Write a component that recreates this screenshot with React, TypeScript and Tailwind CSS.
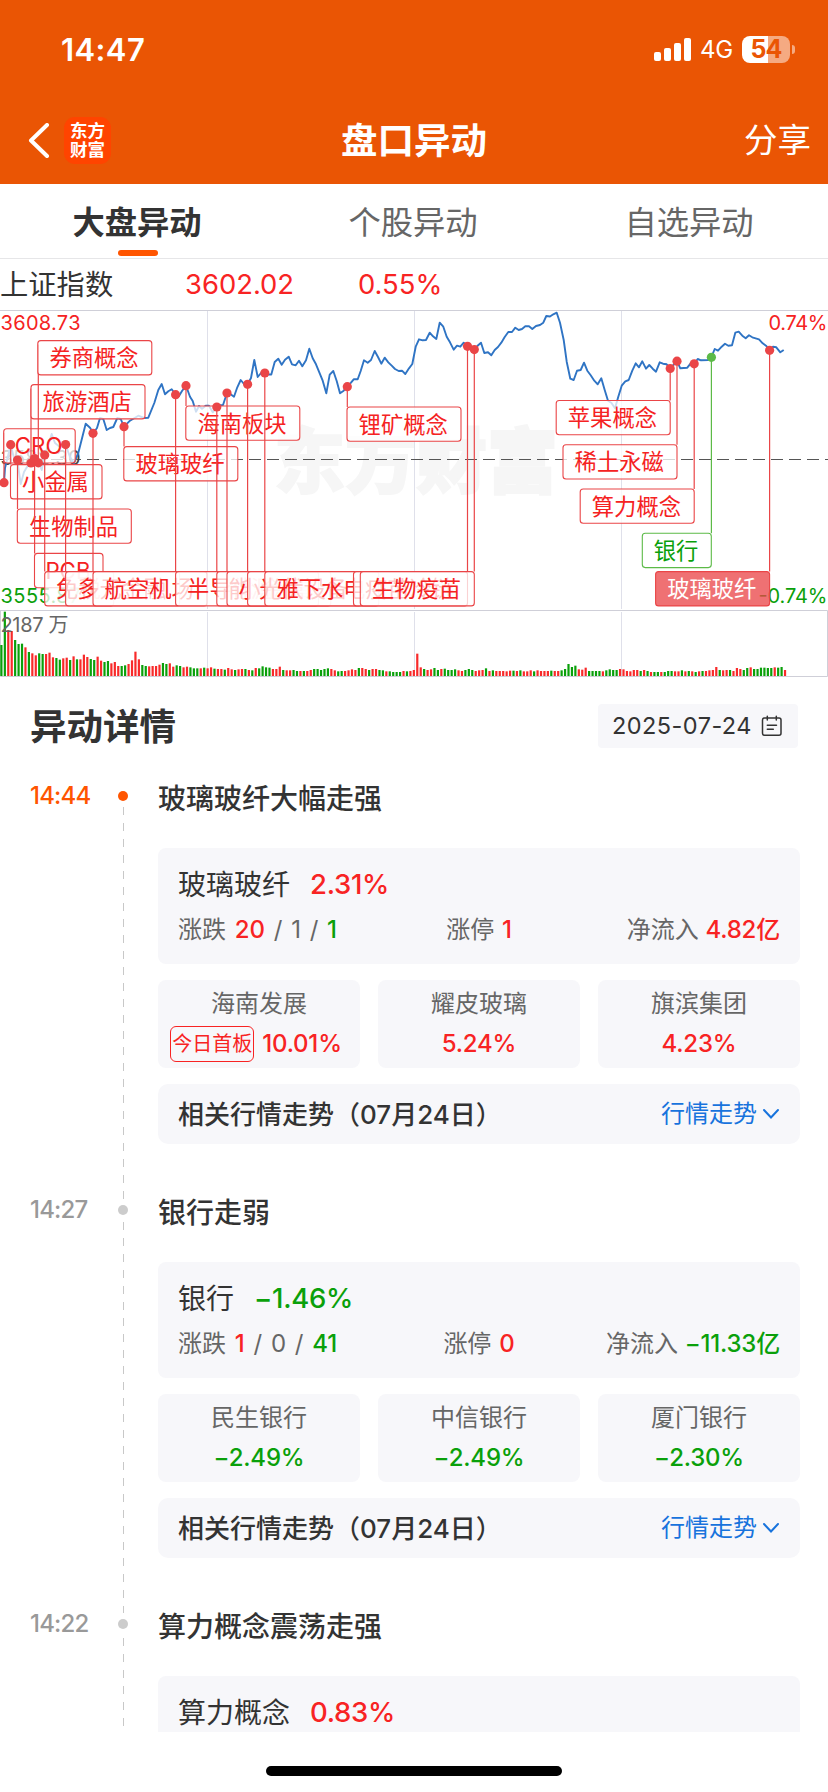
import React from "react";
import { clsx } from "clsx";

type Tone = "up" | "down";

interface Stock {
  name: string;
  change: string;
  tag?: string;
}

interface SectorStats {
  rise: string;
  even: string;
  fall: string;
  limitUp: string;
  inflow: string;
}

interface MoveEvent {
  time: string;
  title: string;
  sector: string;
  change: string;
  tone: Tone;
  stats?: SectorStats;
  stocks?: Stock[];
}

interface ChartTag {
  label: string;
  dotX: number;
  dotY: number;
  x: number;
  y: number;
  w: number;
  kind?: "green" | "active";
}

const toneClass: Record<Tone, string> = {
  up: "text-[#f82323]",
  down: "text-[#0aa00a]",
};

const events: MoveEvent[] = [
  {
    time: "14:44",
    title: "玻璃玻纤大幅走强",
    sector: "玻璃玻纤",
    change: "2.31%",
    tone: "up",
    stats: { rise: "20", even: "1", fall: "1", limitUp: "1", inflow: "4.82亿" },
    stocks: [
      { name: "海南发展", change: "10.01%", tag: "今日首板" },
      { name: "耀皮玻璃", change: "5.24%" },
      { name: "旗滨集团", change: "4.23%" },
    ],
  },
  {
    time: "14:27",
    title: "银行走弱",
    sector: "银行",
    change: "−1.46%",
    tone: "down",
    stats: { rise: "1", even: "0", fall: "41", limitUp: "0", inflow: "−11.33亿" },
    stocks: [
      { name: "民生银行", change: "−2.49%" },
      { name: "中信银行", change: "−2.49%" },
      { name: "厦门银行", change: "−2.30%" },
    ],
  },
  {
    time: "14:22",
    title: "算力概念震荡走强",
    sector: "算力概念",
    change: "0.83%",
    tone: "up",
  },
];

const pricePoints =
  "4,483 5,468 10.7,445 14,458 17.3,460 20.7,484 24,472 27,467 31,463 34.7,459 39,463 41.7,470 44.7,455 48,446 51.7,434 55,443 60,447 65.7,445 70,457 74,463 78.3,453 85.7,423.7 90,427.7 93.3,433 97,428 100,418 103.3,419 106.7,430 110,428 113.3,427 117.3,418 120.7,419 124,426.7 130,420.7 138.3,415.7 144,418 148.3,417.7 154.3,403 158.3,390 161.7,384 165,394.3 168.3,391.3 171.7,389.3 175.7,394.7 179,396 182,391 186,385.7 190,396.7 192.7,401 196,411.7 199,406 202,408.7 205.7,405.7 209,405.7 212.7,412.3 217,407 220,405.3 223,405 227,393 230.3,394 234,396.7 237.3,387.3 240.7,380 244,384 247.7,384 251,378 254.3,360 257.7,377 261,373 265,373 268,374.5 271.3,374.5 274.7,362 278.3,358.7 281.7,364.7 285,359.7 288.7,356.7 292,364.3 295.7,365.3 299,360.7 302.3,366.3 306,360.3 309.3,348.7 312.7,358.3 316,364.3 319.3,372.3 322.7,380.7 326.3,393.3 329.7,374.7 333.3,371 336.7,381 340,393.3 343.7,390.7 347.3,386.7 351,382.7 353.7,379.3 357.7,379.3 360.7,371 364,360.3 367.7,362.7 371,360 374.7,351 378,357 381.3,363.7 384.7,357.7 388.3,362.3 391.7,365.7 395,369 398.7,371 402,370.7 405.3,374 409,368.3 412.3,364 415.7,346.7 419,339.3 422.7,340.3 426,340 429.7,332.7 433,336.3 436.3,339 439.7,322.7 443.3,326.7 446.7,336.7 450,342.3 453.7,349.7 457,345.7 460.3,346.7 463.7,342.7 467.7,346.3 474.3,349.7 477.3,346 481,342.7 484.3,353 488,352.3 491.3,355.3 494.7,350 498,347 501.3,342.7 504.7,337 508.3,332 512,332 515.3,327.7 518.7,330 522,329 525.3,326.3 529,326.3 532.3,329 536,326 540,325 543.3,322.7 546.3,316 550,316.5 553.3,314.3 556.7,312.7 560,322.7 563.7,340 566.7,361.7 570.3,378.7 573.7,380 577,370.7 580.7,370 584,362.7 587.3,370.7 590.7,375.3 594.3,380.7 597.7,384.3 601.3,378.3 604.7,390 608,400.7 611.3,402.7 615,408.3 618.3,396.7 621.7,385.7 625.3,381.3 628.7,380 632.3,370.7 635.7,363.3 639,367.3 642.3,361.3 646,368.7 649.3,365 652.7,368.7 656,371.7 659.7,362.3 663,363.7 666.7,364.3 670.3,368.3 677,361 680.3,368.3 687.3,367.7 690.7,363.3 694.3,363.7 697.7,359 701,360.3 708,360 711.3,357.3 714.7,349 718,350.7 721.7,346.7 725,343.7 728.3,345.7 732,345.3 735.3,332.7 738.7,331.7 742.3,335.7 745.7,338.3 749,335.3 752.3,337.3 759,339.3 762.7,343.3 766,345.7 769.7,350 773,346.7 776.3,347.3 780.3,352.3 783.7,350";

// bar height in thirds of a pixel, followed by r (up) or g (down)
const volumes = (
  "93g 193g 138r 135r 108g 96g 97g 86r 72g 68r 62r 68g 66g 66r 70r 56r 54g 49g 53r 55r 48g 59r 50g 50r 64r 57r 51g 48g 58r 46r 42g 45g 38r 42r 30r 30g 32g 36r 47r 73r 50r 33g 30g 29r 30r 30r 34r 39g 36g 38r 28r 32g 30g 26r 28r 26g 23g 23g 23r 25g 23r 26r 22g 21r 21r 19g 24r 20r 18g 20r 21r 21g 18r 17g 24r 23g 29g 26g 25g " +
  "21r 21r 28r 18g 17r 17r 18g 15g 15r 15g 15r 18r 21g 21g 18g 21g 23g 21r 17r 14g 15g 15r 17r 20r 18r 24g 24r 21r 18g 21r 21r 18g 17g 14r 14g 12g 12g 12g 15r 14g 15r 18r 67r 26r 21g 18r 20r 24g 18g 21r 22g 18g 18g 20g 17r 15r 18g 21g 18g 15r 17r 18r 23g 15r 17g 15r 15r 15r 14r 16r 16g 15r 17g 14r 14r 17r 14g 17r 15r 15r 15r " +
  "16g 15r 15r 17g 21g 36g 27g 31g 20r 19r 25r 15g 15g 15g 15g 14r 17g 20g 18g 18g 21r 20r 15r 14r 18r 18r 15g 18r 15g 12r 12g 12g 12r 12g 15g 15g 14r 14r 17g 14r 15g 14r 12g 14r 15g 15r 17r 18r 27r 18g 17r 18r 18g 15r 24r 21r 18g 24g 26r 21g 21g 25g 25g 24g 24g 26r 25g 27g 18r"
).split(" ");

const tags: ChartTag[] = [
  { label: "CRO", dotX: 4, dotY: 482.7, x: 3.7, y: 428.7, w: 71.5 },
  { label: "小金属", dotX: 10.7, dotY: 444.7, x: 10.5, y: 464.6, w: 91.5 },
  { label: "生物制品", dotX: 17.5, dotY: 460, x: 17.3, y: 509, w: 114 },
  { label: "旅游酒店", dotX: 31, dotY: 463, x: 31, y: 384.6, w: 114 },
  { label: "PCB", dotX: 34.6, dotY: 458.5, x: 34.5, y: 553.4, w: 68.5 },
  { label: "券商概念", dotX: 38.3, dotY: 462.8, x: 37.8, y: 340.6, w: 114 },
  { label: "免税", dotX: 44.7, dotY: 455, x: 44.7, y: 571.6, w: 69 },
  { label: "多元金融", dotX: 65.6, dotY: 444.6, x: 65.6, y: 571.6, w: 114 },
  { label: "航空机场", dotX: 93, dotY: 433.3, x: 93, y: 571.6, w: 114 },
  { label: "玻璃玻纤", dotX: 124, dotY: 426.7, x: 123.8, y: 446.6, w: 114 },
  { label: "半导体", dotX: 175.6, dotY: 394.7, x: 175.6, y: 571.6, w: 91.5 },
  { label: "海南板块", dotX: 186, dotY: 385.7, x: 185.8, y: 406, w: 114 },
  { label: "能源金属", dotX: 216.8, dotY: 407, x: 216.8, y: 571.6, w: 114 },
  { label: "小金属", dotX: 227, dotY: 393, x: 227, y: 571.6, w: 91.5 },
  { label: "光伏设备", dotX: 247.6, dotY: 384.3, x: 247.6, y: 571.6, w: 114 },
  { label: "雅下水电", dotX: 264.8, dotY: 373, x: 264.8, y: 571.6, w: 114 },
  { label: "锂矿概念", dotX: 347.3, dotY: 386.7, x: 347, y: 407, w: 114 },
  { label: "疫苗冷链", dotX: 467.5, dotY: 346.3, x: 353.5, y: 571.6, w: 114 },
  { label: "生物疫苗", dotX: 474.3, dotY: 349.6, x: 360.3, y: 571.6, w: 114 },
  { label: "苹果概念", dotX: 670.2, dotY: 368.5, x: 556.2, y: 400.5, w: 114 },
  { label: "稀土永磁", dotX: 677, dotY: 361.2, x: 563, y: 444.7, w: 114 },
  { label: "算力概念", dotX: 694.2, dotY: 363.8, x: 580.2, y: 489, w: 114 },
  { label: "银行", dotX: 711.4, dotY: 357.3, x: 642.3, y: 533.3, w: 69, kind: "green" },
  { label: "玻璃玻纤", dotX: 769.6, dotY: 350.3, x: 655.6, y: 571.6, w: 114, kind: "active" },
];

function StatusBar() {
  return (
    <div className="flex h-[98px] items-center justify-between pl-[61px] pr-[33px]">
      <span className="text-[31px] font-semibold leading-none tracking-[0.4px]">
        14:47
      </span>
      <div className="flex items-center">
        <div className="flex h-[23px] items-end gap-[3px]">
          <i className="h-[9px] w-[7px] rounded-[2px] bg-white" />
          <i className="h-[13px] w-[7px] rounded-[2px] bg-white" />
          <i className="h-[18px] w-[7px] rounded-[2px] bg-white" />
          <i className="h-[23px] w-[7px] rounded-[2px] bg-white" />
        </div>
        <span className="ml-[9px] mt-[2px] w-[33px] text-[24px] leading-[26px] tracking-[-0.3px]">
          4G
        </span>
        <div className="ml-[9px] flex h-[27px] w-[48px] items-center justify-center rounded-[8px] bg-[linear-gradient(90deg,#fff_54%,#f5aa82_54%)] text-[25px] font-bold leading-none tracking-[-1px] text-[#ea5504]">
          54
        </div>
        <i className="ml-[2px] h-[9px] w-[3px] rounded-r-full bg-[#f5aa82]" />
      </div>
    </div>
  );
}

function NavBar() {
  return (
    <div className="grid h-[86px] grid-cols-[1fr_auto_1fr] items-center">
      <div className="flex items-center pl-[28px]">
        <svg width="22" height="36" viewBox="0 0 22 36" fill="none">
          <path
            d="M19 2 L3 17.5 L19 33"
            stroke="#fff"
            strokeWidth="4"
            strokeLinecap="round"
            strokeLinejoin="round"
          />
        </svg>
        <div className="mb-[2px] ml-[14px] flex h-[47px] w-[47px] flex-col items-center justify-center rounded-[11px] bg-[#ff4400] text-[17.5px] font-bold leading-[19px]">
          <span>东方</span>
          <span>财富</span>
        </div>
      </div>
      <h1 className="text-[36.5px] font-bold leading-none">盘口异动</h1>
      <span className="pr-[17px] text-right text-[33.5px] leading-none">
        分享
      </span>
    </div>
  );
}

function Tabs() {
  const items = ["大盘异动", "个股异动", "自选异动"];
  return (
    <div className="grid h-[75px] grid-cols-3 border-b border-[#e6e6e8]">
      {items.map((item, i) => (
        <div key={item} className="flex flex-col items-center pt-[15px]">
          <span
            className={clsx(
              "-ml-[2px] text-[32.3px] leading-[48px]",
              i === 0 ? "font-bold text-[#333333]" : "text-[#666666]",
            )}
          >
            {item}
          </span>
          {i === 0 && (
            <i className="mt-[3px] h-[6px] w-[40px] rounded-[3px] bg-[#ff5500]" />
          )}
        </div>
      ))}
    </div>
  );
}

function TagBox({ label, dotX, dotY, x, y, w, kind }: ChartTag) {
  const color = kind === "green" ? "#5cba47" : "#ea4547";
  const text =
    kind === "active" ? "#ffffff" : kind === "green" ? "#0aa00a" : "#f52222";
  const lineEnd = y > dotY ? y : y + 4;

  return (
    <g>
      <line x1={dotX} x2={dotX} y1={dotY} y2={lineEnd} stroke={color} strokeWidth="1.2" />
      <rect
        x={x}
        y={y}
        width={w}
        height="34.3"
        rx="3"
        fill={kind === "active" ? color : "#ffffff"}
        fillOpacity="0.76"
        stroke={color}
        strokeWidth="1.1"
      />
      <text
        x={x + w / 2 - 0.8}
        y={y + 25.7}
        textAnchor="middle"
        fontSize="22.3"
        fill={text}
      >
        {label}
      </text>
    </g>
  );
}

function MarketChart() {
  return (
    <svg
      width="828"
      height="368"
      viewBox="0 310 828 368"
      className="block shrink-0"
    >
      <text
        x="274"
        y="487"
        fontSize="71"
        fontWeight="900"
        fill="#f6f6f6"
        stroke="#f6f6f6"
        strokeWidth="2"
        textLength="284"
      >
        东方财富
      </text>
      <g stroke="#dfe0ea" strokeWidth="1">
        <path d="M207.5 311V609M414.5 311V609M621.5 311V609" />
        <path d="M207.5 612V676M414.5 612V676M621.5 612V676" />
      </g>
      <path d="M0 310.5H828M0 610.5H827.5V676.5H0.5V610" fill="none" stroke="#cfcfd8" />
      <line
        x1="-3"
        x2="828"
        y1="459.5"
        y2="459.5"
        stroke="#555"
        strokeDasharray="12 6"
      />

      <text x="0.5" y="330.3" fontSize="20" fill="#f52222" textLength="80">
        3608.73
      </text>
      <text x="768.5" y="330.3" fontSize="20" fill="#f52222" textLength="59">
        0.74%
      </text>
      <text x="0.5" y="465" fontSize="20" fill="#444" textLength="80">
        3582.30
      </text>
      <text x="0.5" y="603" fontSize="20" fill="#0aa00a" textLength="80">
        3555.87
      </text>
      <text x="758.5" y="603" fontSize="20" fill="#0aa00a" textLength="69">
        -0.74%
      </text>

      <polyline
        points={pricePoints}
        fill="none"
        stroke="#2f74c4"
        strokeWidth="1.9"
        strokeLinejoin="round"
      />

      {tags.map((tag) => (
        <TagBox key={`${tag.label}-${tag.dotX}`} {...tag} />
      ))}
      {tags.map((tag) => (
        <circle
          key={`dot-${tag.dotX}`}
          cx={tag.dotX}
          cy={tag.dotY}
          r="4.6"
          fill={tag.kind === "green" ? "#5cba47" : "#ea4547"}
        />
      ))}

      {volumes.map((item, i) => {
        const h = parseInt(item, 10) / 3;
        return (
          <rect
            key={i}
            x={0.3 + i * 3.437}
            y={676 - h}
            width="2.2"
            height={h}
            fill={item.endsWith("r") ? "#f82a2a" : "#0aa00a"}
          />
        );
      })}
      <text x="0.5" y="632" fontSize="20" fill="#666" textLength="68">
        2187 万
      </text>
    </svg>
  );
}

function CalendarIcon() {
  return (
    <svg
      width="22"
      height="22"
      viewBox="0 0 22 22"
      fill="none"
      stroke="#333"
      strokeWidth="1.5"
      strokeLinecap="round"
    >
      <rect x="1.5" y="3" width="18.5" height="17.3" rx="2" />
      <path d="M6.3 1.2V5M15.3 1.2V5M6.3 10.2H15.5M6.3 14.3H12.3" />
    </svg>
  );
}

function EventCard({ event }: { event: MoveEvent }) {
  const { stats } = event;
  const tone = toneClass[event.tone];
  return (
    <div className="h-[116px] rounded-lg bg-[#f7f7fa] px-5 pt-[17px]">
      <div className="flex h-10 items-center gap-[20px] text-[28px]">
        <span className="text-[#333333]">{event.sector}</span>
        <span className={clsx("text-[27.5px] font-medium tracking-[-0.3px]", tone)}>
          {event.change}
        </span>
      </div>
      {stats && (
        <div className="mt-[5px] grid h-10 grid-cols-[1fr_auto_1fr] items-center text-[24px] text-[#666666]">
          <span className="whitespace-pre [word-spacing:2px]">
            涨跌 <b className="font-medium text-[#f82323]">{stats.rise}</b>
            {" / "}
            {stats.even}
            {" / "}
            <b className="font-medium text-[#0aa00a]">{stats.fall}</b>
          </span>
          <span className="[word-spacing:1px]">
            涨停 <b className="font-medium text-[#f82323]">{stats.limitUp}</b>
          </span>
          <span className="text-right">
            净流入 <b className={clsx("font-medium tracking-[-0.2px]", tone)}>{stats.inflow}</b>
          </span>
        </div>
      )}
    </div>
  );
}

function StockCard({ stock, tone }: { stock: Stock; tone: Tone }) {
  return (
    <div className="flex h-[88px] flex-col items-center rounded-lg bg-[#f7f7fa] pt-[6px]">
      <span className="text-[24px] leading-[36px] text-[#666666]">
        {stock.name}
      </span>
      <div className={clsx("mt-[3px] flex h-[38px] items-center gap-2", stock.tag && "-ml-[6px]")}>
        {stock.tag && (
          <span className="flex h-[36px] w-[84px] items-center justify-center whitespace-nowrap rounded-[6px] border-[1.5px] border-[#f82323] text-[20px] leading-none text-[#f82323]">
            {stock.tag}
          </span>
        )}
        <span
          className={clsx(
            "text-[24px] font-medium leading-none tracking-[-0.2px]",
            toneClass[tone],
          )}
        >
          {stock.change}
        </span>
      </div>
    </div>
  );
}

function TrendRow() {
  return (
    <div className="flex h-[60px] items-center justify-between rounded-[10px] bg-[#f7f7fa] px-5">
      <span className="pt-[1px] text-[26px] font-medium text-[#333333]">
        相关行情走势（07月24日）
      </span>
      <span className="flex items-center gap-[5px] text-[24px] text-[#1773dd]">
        行情走势
        <svg width="18" height="12" viewBox="0 0 18 12" fill="none">
          <path d="M2 2 L9 9.5 L16 2" stroke="#1773dd" strokeWidth="2" strokeLinecap="round" />
        </svg>
      </span>
    </div>
  );
}

function TimelineItem({ event, active }: { event: MoveEvent; active: boolean }) {
  return (
    <div className="grid h-[414px] shrink-0 grid-cols-[86px_14px_28px_642px] pl-[30px]">
      <span
        className={clsx(
          "text-[24px] font-medium leading-[36px] tracking-[-0.8px]",
          active ? "text-[#ff5500]" : "text-[#999999]",
        )}
      >
        {event.time}
      </span>
      <div className="relative z-10 mt-[7px] flex h-[22px] items-center justify-center bg-white">
        <i
          className={clsx(
            "h-[10px] w-[10px] rounded-full",
            active ? "bg-[#ff5500]" : "bg-[#cccccc]",
          )}
        />
      </div>
      <span />
      <div>
        <h3 className="pt-[1px] text-[28px] font-medium leading-[40px] text-[#333333]">
          {event.title}
        </h3>
        <div className="mt-[29px] flex flex-col gap-4">
          <EventCard event={event} />
          {event.stocks && (
            <>
              <div className="grid grid-cols-3 gap-[18px]">
                {event.stocks.map((stock) => (
                  <StockCard key={stock.name} stock={stock} tone={event.tone} />
                ))}
              </div>
              <TrendRow />
            </>
          )}
        </div>
      </div>
    </div>
  );
}

export default function App() {
  return (
    <div className="flex h-[1792px] w-[828px] flex-col overflow-hidden bg-white font-[Inter,'Noto_Sans_CJK_SC',sans-serif] text-[#333333]">
      <header className="h-[184px] shrink-0 bg-[#ea5504] text-white">
        <StatusBar />
        <NavBar />
      </header>
      <Tabs />

      <div className="flex h-[51px] shrink-0 items-center pt-[1px] text-[28.3px] leading-none">
        <span className="w-[185px]">上证指数</span>
        <span className="w-[173px] text-[27.4px] text-[#f82323]">3602.02</span>
        <span className="text-[27.4px] text-[#f82323]">0.55%</span>
      </div>

      <MarketChart />

      <div className="flex h-[100px] shrink-0 items-center justify-between pl-[30px] pr-[30px] pb-[4px]">
        <h2 className="pt-[2px] text-[36.5px] font-bold">异动详情</h2>
        <div className="flex h-[44px] w-[200px] items-center justify-between rounded bg-[#f7f7fa] pl-[14px] pr-[15px]">
          <span className="text-[23.5px] tracking-[0.45px]">2025-07-24</span>
          <CalendarIcon />
        </div>
      </div>

      <div className="relative flex h-[954px] shrink-0 flex-col overflow-hidden">
        <i className="absolute left-[123px] top-[29px] h-[920px] w-px bg-[repeating-linear-gradient(180deg,#c8c8c8_0px,#c8c8c8_8px,transparent_8px,transparent_15.98px)]" />
        {events.map((event, i) => (
          <TimelineItem key={event.time} event={event} active={i === 0} />
        ))}
      </div>

      <div className="flex h-[60px] shrink-0 justify-center pt-[34px]">
        <i className="h-[10px] w-[296px] rounded-full bg-black" />
      </div>
    </div>
  );
}
